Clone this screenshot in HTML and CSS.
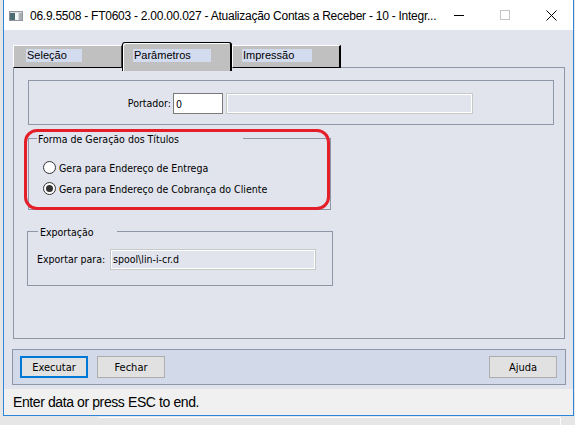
FILE: index.html
```html
<!DOCTYPE html>
<html lang="pt-BR">
<head>
    <meta charset="UTF-8">
    <title>Atualização Contas a Receber</title>
    <link rel="stylesheet" href="styles.css">
</head>
<body>
    <div class="window">
        <div class="titlebar">
            <svg class="app-icon" width="14" height="10" viewBox="0 0 14 10">
                <rect x="0" y="0" width="14" height="10" fill="#8e959c"/>
                <rect x="1" y="1" width="12" height="8" fill="#d9dde1"/>
                <rect x="1" y="2" width="5" height="7" fill="#4d6b72"/>
                <rect x="6" y="2" width="3" height="7" fill="#f4f6f7"/>
                <rect x="10" y="2" width="3" height="7" fill="#a9afb5"/>
            </svg>
            <span class="title">06.9.5508 - FT0603 - 2.00.00.027 - Atualização Contas a Receber - 10 - Integr...</span>
            <div class="controls">
                <span class="ctl">
                    <svg width="10" height="10" viewBox="0 0 10 10"><path d="M0 5.5h10" stroke="#000" stroke-width="1"/></svg>
                </span>
                <span class="ctl">
                    <svg width="10" height="10" viewBox="0 0 10 10"><rect x="0.5" y="0.5" width="9" height="9" fill="none" stroke="#c4c4c4"/></svg>
                </span>
                <span class="ctl">
                    <svg width="11" height="11" viewBox="0 0 11 11"><path d="M0.5 0.5l10 10M10.5 0.5l-10 10" stroke="#000" stroke-width="1"/></svg>
                </span>
            </div>
        </div>

        <div class="client">
            <div class="tabs">
                <div class="tab tab-first"><span class="tab-label label-selecao">Seleção</span></div>
                <div class="tab tab-active"><span class="tab-label label-parametros">Parâmetros</span></div>
                <div class="tab"><span class="tab-label label-impressao">Impressão</span></div>
                <div class="tab-fill"></div>
            </div>

            <div class="panel">
                <div class="box box-portador">
                    <label class="field-label portador-label" for="portador">Portador:</label>
                    <input id="portador" class="input input-portador" type="text" value="0">
                    <span class="input readonly readonly-portador"></span>
                </div>

                <div class="group group-forma">
                    <div class="legend legend-forma">Forma de Geração dos Títulos</div>
                    <label class="radio-row"><span class="radio"></span>Gera para Endereço de Entrega</label>
                    <label class="radio-row"><span class="radio checked"></span>Gera para Endereço de Cobrança do Cliente</label>
                </div>

                <div class="group group-export">
                    <div class="legend legend-export">Exportação</div>
                    <div class="export-row">
                        <span class="field-label export-label">Exportar para:</span>
                        <span class="input readonly readonly-export">spool\lin-i-cr.d</span>
                    </div>
                </div>

                <div class="mark"></div>
            </div>

            <div class="buttonbar">
                <button class="btn btn-default">Executar</button>
                <button class="btn">Fechar</button>
                <span class="spacer"></span>
                <button class="btn">Ajuda</button>
            </div>
        </div>

        <div class="statusbar">Enter data or press ESC to end.</div>
    </div>
    <div class="behind"></div>
</body>
</html>
```

FILE: styles.css
```css
:root {
    --client-bg: #e1e4ed;
    --frame-line: #8e97a7;
    --tab-bg: #c0c0c0;
    --label-bg: #d3dbef;
    --bar-bg: #d2daea;
    --accent: #2b86d6;
    --ui-font: "DejaVu Sans Condensed", "Liberation Sans", Arial, sans-serif;
}
body {
    margin: 0;
    width: 575px;
    height: 425px;
    overflow: hidden;
    background-color: #e6e6e6;
    font-family: "Liberation Sans", Arial, sans-serif;
    font-size: 11.5px;
    color: #000;
}
.window {
    margin-left: 3px;
    width: 569px;
    border: 1px solid var(--accent);
    border-top: none;
}

/* barra de título */
.titlebar {
    height: 30px;
    display: flex;
    align-items: center;
    background-color: #fff;
}
.app-icon {
    margin-left: 5px;
    margin-top: 1px;
    flex-shrink: 0;
}
.title {
    margin-left: 7px;
    margin-top: 1px;
    font-size: 12px;
    letter-spacing: -0.25px;
    white-space: nowrap;
}
.controls {
    margin-left: auto;
    display: flex;
    flex-shrink: 0;
}
.ctl {
    width: 46px;
    height: 30px;
    display: flex;
    align-items: center;
    justify-content: center;
}

/* área cliente */
.client {
    background-color: var(--client-bg);
    padding: 12px 0 4px 8px;
}
.tabs {
    display: flex;
    align-items: flex-end;
    margin-left: 1px;
    width: 552px;
}
.tab {
    box-sizing: border-box;
    width: 109px;
    height: 23px;
    background-color: var(--tab-bg);
    border-top: 1px solid #fff;
    border-left: 1px solid #fff;
    border-right: 2px solid #000;
    border-bottom: 1px solid #000;
}
.tab-first {
    border-right: 1px solid #404040;
}
.tab-active {
    position: relative;
    z-index: 1;
    width: 110px;
    height: 29px;
    margin-bottom: -3px;
    border: 1px solid #000;
    border-right-width: 2px;
    border-bottom: none;
    border-radius: 3px 3px 0 0;
    box-shadow: inset 1px 1px 0 #fff;
}
.tab-label {
    display: block;
    height: 13px;
    line-height: 13px;
    padding-left: 1px;
    font-size: 11px;
    background-color: var(--label-bg);
}
.label-selecao {
    margin: 3px 0 0 12px;
    width: 55px;
}
.label-parametros {
    margin: 6px 0 0 10px;
    width: 77px;
}
.label-impressao {
    margin: 3px 0 0 9px;
    width: 69px;
}
.tab-fill {
    flex: 1;
    height: 1px;
    border-bottom: 1px solid var(--frame-line);
}

.panel {
    position: relative;
    box-sizing: border-box;
    margin-left: 1px;
    width: 552px;
    height: 271px;
    padding: 12px 0 0 14px;
    border: 1px solid var(--frame-line);
    border-top: none;
    font-family: var(--ui-font);
    font-size: 10.5px;
}
.box-portador {
    box-sizing: border-box;
    width: 526px;
    height: 45px;
    padding-top: 12px;
    display: flex;
    align-items: flex-start;
    border: 1px solid var(--frame-line);
}
.field-label {
    line-height: 21px;
    white-space: nowrap;
}
.portador-label {
    width: 142px;
    margin-right: 2px;
    text-align: right;
}
.input {
    box-sizing: border-box;
    height: 21px;
    padding: 0 2px;
    font-family: var(--ui-font);
    font-size: 10.5px;
    line-height: 19px;
}
.input-portador {
    width: 50px;
    border: 1px solid #7a7a7a;
    background-color: #fff;
    outline: none;
}
.readonly {
    display: block;
    border: 1px solid #c8c8c8;
    box-shadow: inset 1px 1px 0 #fff, inset -1px -1px 0 #fff;
    background-color: var(--client-bg);
}
.readonly-portador {
    width: 247px;
    margin-left: 3px;
}

/* grupos com título sobre a borda */
.group {
    box-sizing: border-box;
    border: 1px solid var(--frame-line);
}
.legend {
    box-sizing: border-box;
    height: 14px;
    line-height: 14px;
    margin-top: -7px;
    background-color: var(--client-bg);
    white-space: nowrap;
}
.group-forma {
    width: 303px;
    margin-top: 13px;
    padding-bottom: 10px;
}
.legend-forma {
    margin: -7px 0 11px 8px;
    padding-left: 1px;
    width: 206px;
}
.radio-row {
    display: flex;
    align-items: center;
    height: 21px;
    margin-left: 14px;
}
.radio {
    box-sizing: border-box;
    width: 13px;
    height: 13px;
    margin-right: 3px;
    border: 1px solid #333;
    border-radius: 50%;
    background-color: #fff;
    display: flex;
    align-items: center;
    justify-content: center;
}
.radio.checked::after {
    content: "";
    width: 7px;
    height: 7px;
    border-radius: 50%;
    background-color: #333;
}
.group-export {
    width: 306px;
    margin: 21px 0 0 -1px;
    padding-bottom: 15px;
}
.legend-export {
    margin: -7px 0 10px 10px;
    padding-left: 2px;
    width: 79px;
}
.export-row {
    display: flex;
    margin-left: 9px;
}
.export-label {
    width: 73px;
}
.readonly-export {
    width: 206px;
    color: #000;
}

/* marcação vermelha sobre o grupo */
.mark {
    position: absolute;
    left: 10px;
    top: 61px;
    width: 306px;
    height: 81px;
    box-sizing: border-box;
    border: 3px solid #e41f2a;
    border-radius: 13px;
    pointer-events: none;
}

/* barra de botões */
.buttonbar {
    box-sizing: border-box;
    width: 554px;
    height: 36px;
    margin-top: 10px;
    padding: 6px 8px 0 7px;
    display: flex;
    gap: 9px;
    background-color: var(--bar-bg);
    border: 1px solid var(--frame-line);
}
.btn {
    box-sizing: border-box;
    width: 68px;
    height: 22px;
    padding: 0;
    font-family: var(--ui-font);
    font-size: 11px;
    color: #000;
    background-color: #e1e1e1;
    border: 1px solid #adadad;
}
.btn-default {
    border: 2px solid #0078d7;
}
.spacer {
    flex: 1;
}

.statusbar {
    height: 26px;
    line-height: 26px;
    padding-left: 9px;
    background-color: #f0f0f0;
    font-size: 14px;
    letter-spacing: -0.4px;
}
.behind {
    margin: 1px 0 0 98px;
    width: 462px;
    height: 8px;
    border-top: 1px solid #fbfbfb;
    border-right: 1px solid #fbfbfb;
}
```
